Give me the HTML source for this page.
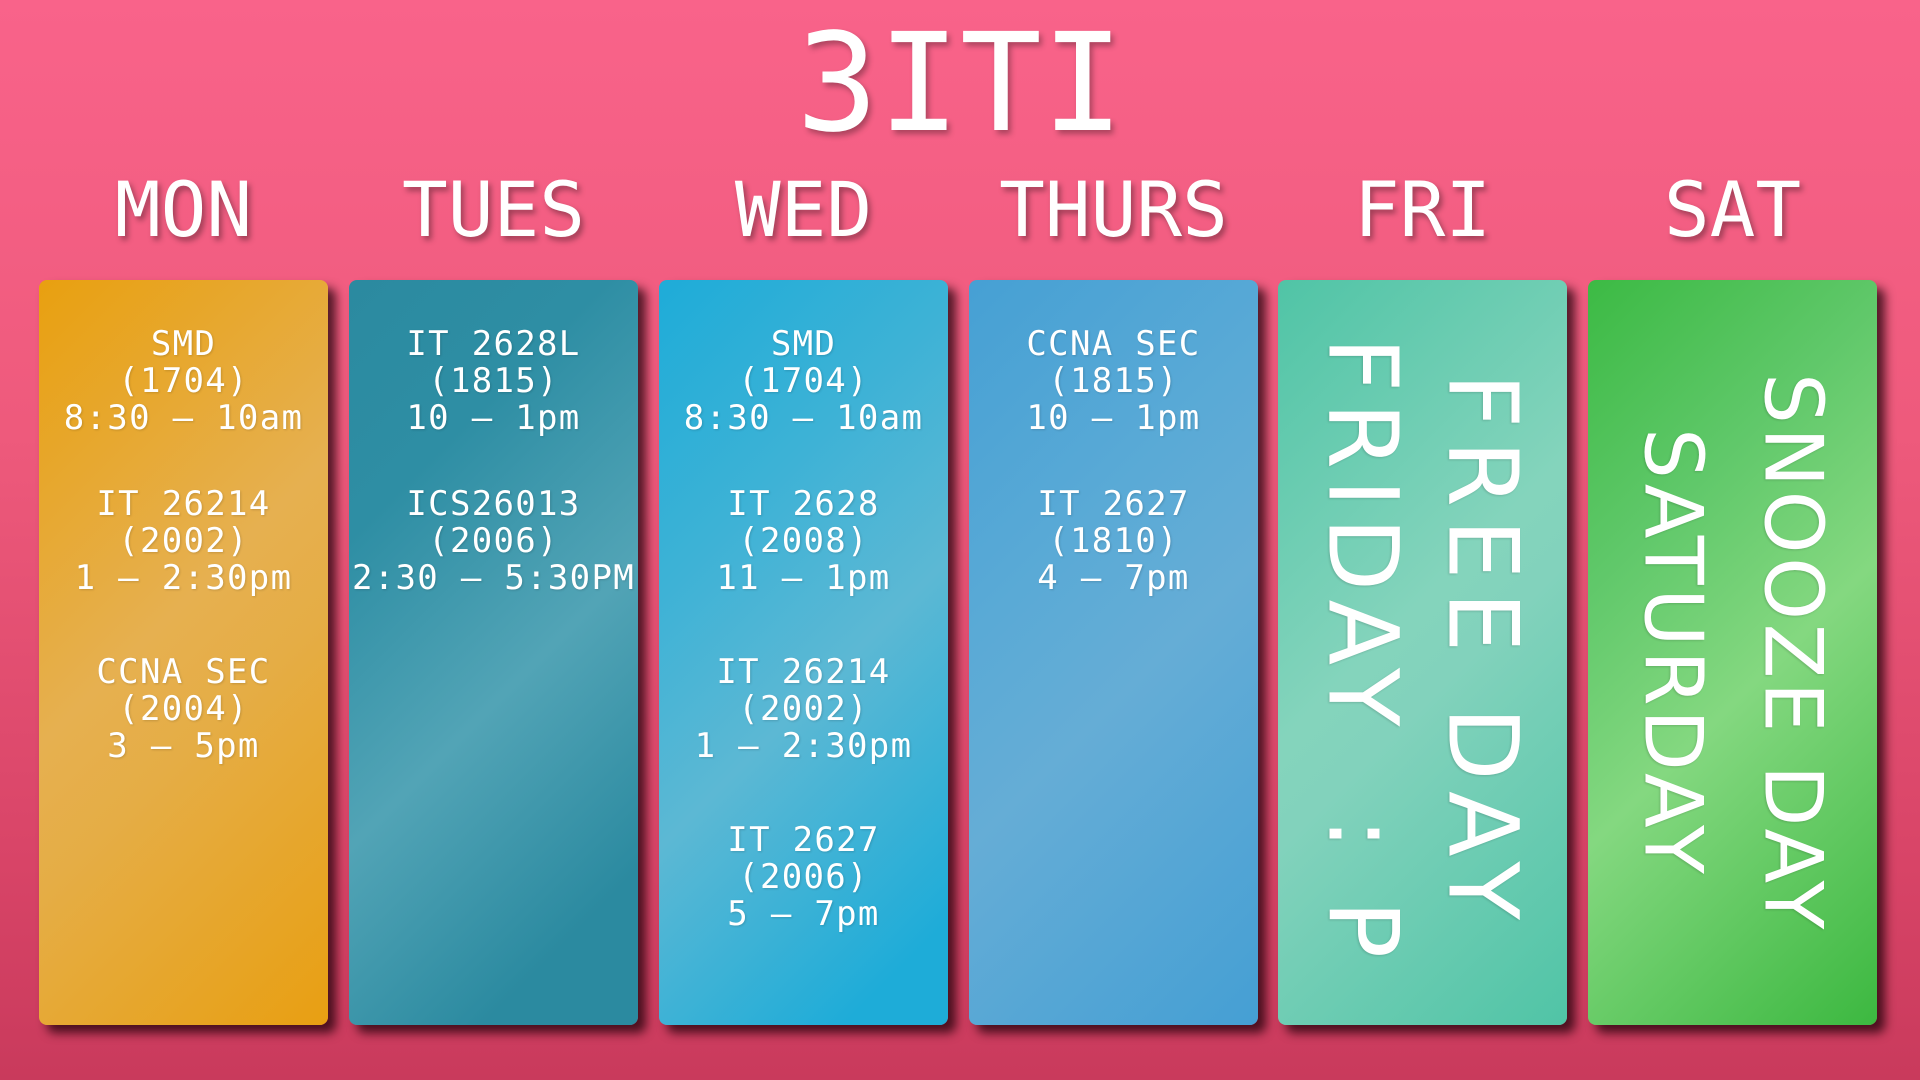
<!DOCTYPE html>
<html><head><meta charset="utf-8"><style>
html,body{margin:0;padding:0}
body{width:1920px;height:1080px;overflow:hidden;position:relative;
background:linear-gradient(180deg,#f9638a 0%,#ee5a7c 40%,#d84467 80%,#c93a5c 100%);
font-family:"DejaVu Sans Mono","Liberation Mono",monospace;color:#fff}
.title{position:absolute;left:0;width:1920px;top:14px;text-align:center;font-size:136px;line-height:140px;text-shadow:3px 4px 6px rgba(0,0,0,.3)}
.day{position:absolute;top:170px;width:289px;text-align:center;font-size:76px;line-height:80px;text-shadow:3px 4px 6px rgba(0,0,0,.35)}
.card{position:absolute;top:280px;width:289px;height:745px;border-radius:8px;box-shadow:8px 8px 10px rgba(30,0,10,.75);text-align:center;font-size:34px;line-height:37px;letter-spacing:1.3px;box-sizing:border-box;text-shadow:1px 1px 2px rgba(0,0,0,.15)}
.card p{margin:0 0 49px 0;white-space:pre}
.card.t{padding-top:46px}
.v{font-family:"DejaVu Sans",sans-serif;font-size:96px;line-height:120px;letter-spacing:12px;position:absolute;left:0;top:0;width:289px;height:745px;display:flex;align-items:center;justify-content:center}
.v > div{writing-mode:vertical-rl;text-align:center;white-space:pre}
.v.s{font-size:80px;letter-spacing:3.5px}
</style></head><body>
<div class="title">3ITI</div>
<div class="day" style="left:39px">MON</div>
<div class="day" style="left:349px">TUES</div>
<div class="day" style="left:659px">WED</div>
<div class="day" style="left:969px">THURS</div>
<div class="day" style="left:1278px">FRI</div>
<div class="day" style="left:1588px">SAT</div>

<div class="card t" style="left:39px;background:linear-gradient(135deg,#e8a010 0%,#e6b050 45%,#e5ad45 60%,#e89f12 100%)">
<p>SMD
(1704)
8:30 – 10am</p><p style="margin-bottom:57px">IT 26214
(2002)
1 – 2:30pm</p><p>CCNA SEC
(2004)
3 – 5pm</p></div>

<div class="card t" style="left:349px;background:linear-gradient(135deg,#2b8aa0 0%,#2e8ea4 25%,#52a4b6 55%,#2b8aa0 85%)">
<p>IT 2628L
(1815)
10 – 1pm</p><p>ICS26013
(2006)
2:30 – 5:30PM</p></div>

<div class="card t" style="left:659px;background:linear-gradient(135deg,#1eacd8 0%,#3db2d6 30%,#5cb8d4 55%,#1eacd8 90%)">
<p>SMD
(1704)
8:30 – 10am</p><p style="margin-bottom:57px">IT 2628
(2008)
11 – 1pm</p><p style="margin-bottom:57px">IT 26214
(2002)
1 – 2:30pm</p><p>IT 2627
(2006)
5 – 7pm</p></div>

<div class="card t" style="left:969px;background:linear-gradient(135deg,#46a0d4 0%,#5aaad6 35%,#65add6 55%,#459fd4 100%)">
<p>CCNA SEC
(1815)
10 – 1pm</p><p>IT 2627
(1810)
4 – 7pm</p></div>

<div class="card" style="left:1278px;padding:0;background:linear-gradient(135deg,#50c4a6 0%,#84d4bc 45%,#82d2bc 55%,#50c4a6 100%)">
<div class="v"><div>FREE DAY
<span style="letter-spacing:10px">FRIDAY  : P</span></div></div></div>

<div class="card" style="left:1588px;padding:0;background:linear-gradient(135deg,#3cba44 0%,#60c86a 30%,#84d880 55%,#3cb840 100%)">
<div class="v s"><div>SNOOZE DAY
SATURDAY</div></div></div>
</body></html>
